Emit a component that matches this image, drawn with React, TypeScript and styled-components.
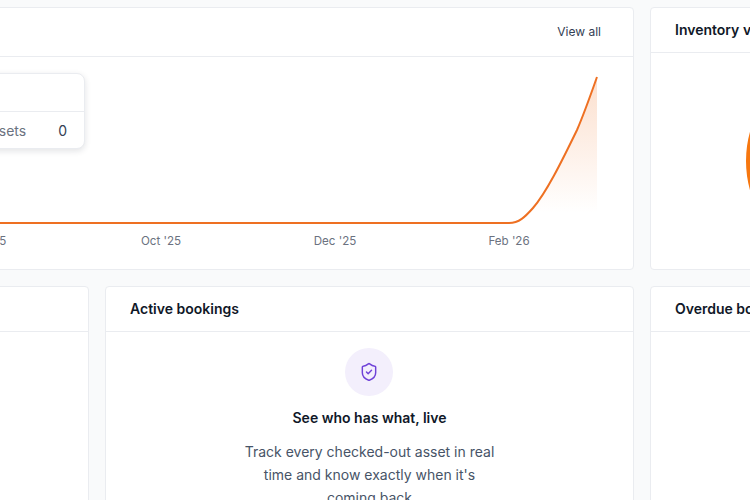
import { ShieldCheck } from "lucide-react";
import styled, { createGlobalStyle } from "styled-components";

const GlobalStyle = createGlobalStyle`
  html, body {
    margin: 0;
    height: 100%;
    overflow: hidden;
    background: #f9fafb;
    font-family: Inter, "Liberation Sans", sans-serif;
  }
`;

const Page = styled.div`
  display: grid;
  grid-template-columns: repeat(3, 529px);
  grid-auto-rows: min-content;
  gap: 16px;
  width: 1619px;
  margin-left: -440px;
  padding-top: 7px;
`;

const Card = styled.section<{ $span?: number }>`
  grid-column: span ${(p) => p.$span ?? 1};
  display: flex;
  flex-direction: column;
  min-height: 263px;
  background: #fff;
  border: 1px solid #eaecf0;
  border-radius: 4px;
  box-sizing: border-box;
`;

const CardHeader = styled.header<{ $height: number }>`
  display: flex;
  align-items: center;
  justify-content: space-between;
  height: ${(p) => p.$height}px;
  padding: 0 24px;
  border-bottom: 1px solid #eaecf0;
  box-sizing: border-box;
  flex-shrink: 0;
`;

const CardTitle = styled.h3`
  margin: 0;
  font-size: 14px;
  line-height: 20px;
  font-weight: 600;
  color: #101828;
  white-space: nowrap;
`;

const ViewAll = styled.a`
  margin-left: auto;
  padding: 0 8px;
  font-size: 12px;
  line-height: 20px;
  color: #344054;
`;

const ChartBody = styled.div`
  position: relative;
  height: 212px;
`;

const ChartSvg = styled.svg`
  display: block;
  width: 1072px;
  height: 212px;
`;

const AxisLabel = styled.text`
  font-size: 11.6px;
  fill: #6b7280;
  text-anchor: middle;
`;

const Tooltip = styled.div`
  position: absolute;
  left: 323px;
  top: 16px;
  width: 201px;
  background: #fff;
  border: 1px solid #eaecf0;
  border-radius: 8px;
  box-shadow: 0 2px 6px rgba(16, 24, 40, 0.12);
  box-sizing: border-box;
`;

const TooltipHead = styled.div`
  height: 37px;
  border-bottom: 1px solid #eaecf0;
`;

const TooltipRow = styled.div`
  display: flex;
  justify-content: flex-end;
  align-items: center;
  gap: 32px;
  height: 36px;
  padding: 0 17px;
  font-size: 14px;
  color: #6b7280;
`;

const TooltipValue = styled.span`
  color: #344054;
`;

const DonutBody = styled.div`
  display: flex;
  align-items: center;
  height: 216px;
  padding-left: 83px;
  overflow: hidden;
`;

const EmptyState = styled.div`
  display: flex;
  flex-direction: column;
  align-items: center;
  padding: 16px 24px 0;
  text-align: center;
`;

const IconCircle = styled.div`
  display: flex;
  align-items: center;
  justify-content: center;
  width: 48px;
  height: 48px;
  margin-left: -1px;
  border-radius: 50%;
  background: #f3effc;
  color: #6f42d8;
`;

const EmptyTitle = styled.h4`
  margin: 12px 0 0;
  font-size: 14px;
  line-height: 20px;
  font-weight: 600;
  color: #101828;
`;

const EmptyText = styled.p`
  margin: 12px 0 0;
  max-width: 255px;
  font-size: 14px;
  line-height: 23px;
  color: #475467;
`;

const axisTicks = [
  { x: 424, label: "Aug '25" },
  { x: 600, label: "Oct '25" },
  { x: 774, label: "Dec '25" },
  { x: 948, label: "Feb '26" },
];

const line =
  "M0 166 L948 166 C958 166 964 160 972 151 C985 136 1000 106 1016 73 C1023 57 1030 37 1036 20";

export default function App() {
  return (
    <>
      <GlobalStyle />
      <Page>
        <Card $span={2}>
          <CardHeader $height={49}>
            <ViewAll>View all</ViewAll>
          </CardHeader>
          <ChartBody>
            <ChartSvg viewBox="0 0 1072 212">
              <defs>
                <linearGradient id="area" x1="0" y1="20" x2="0" y2="156" gradientUnits="userSpaceOnUse">
                  <stop offset="0" stopColor="#f07020" stopOpacity="0.22" />
                  <stop offset="1" stopColor="#f07020" stopOpacity="0" />
                </linearGradient>
              </defs>
              <path d={`${line} L1036 166 L0 166 Z`} fill="url(#area)" />
              <path d={line} fill="none" stroke="#ee7022" strokeWidth="2" />
              {axisTicks.map((t) => (
                <AxisLabel key={t.label} x={t.x} y={188}>
                  {t.label}
                </AxisLabel>
              ))}
            </ChartSvg>
            <Tooltip>
              <TooltipHead />
              <TooltipRow>
                <span>Assets</span>
                <TooltipValue>0</TooltipValue>
              </TooltipRow>
            </Tooltip>
          </ChartBody>
        </Card>
        <Card>
          <CardHeader $height={45}>
            <CardTitle>Inventory value</CardTitle>
          </CardHeader>
          <DonutBody>
            <svg width="240" height="240" viewBox="0 0 240 240">
              <circle cx="120" cy="120" r="96" fill="none" stroke="#f7770f" strokeWidth="24" />
            </svg>
          </DonutBody>
        </Card>
        <Card>
          <CardHeader $height={45} />
        </Card>
        <Card>
          <CardHeader $height={45}>
            <CardTitle>Active bookings</CardTitle>
          </CardHeader>
          <EmptyState>
            <IconCircle>
              <ShieldCheck size={20} strokeWidth={1.75} />
            </IconCircle>
            <EmptyTitle>See who has what, live</EmptyTitle>
            <EmptyText>Track every checked-out asset in real time and know exactly when it's coming back</EmptyText>
          </EmptyState>
        </Card>
        <Card>
          <CardHeader $height={45}>
            <CardTitle>Overdue bookings</CardTitle>
          </CardHeader>
        </Card>
      </Page>
    </>
  );
}
